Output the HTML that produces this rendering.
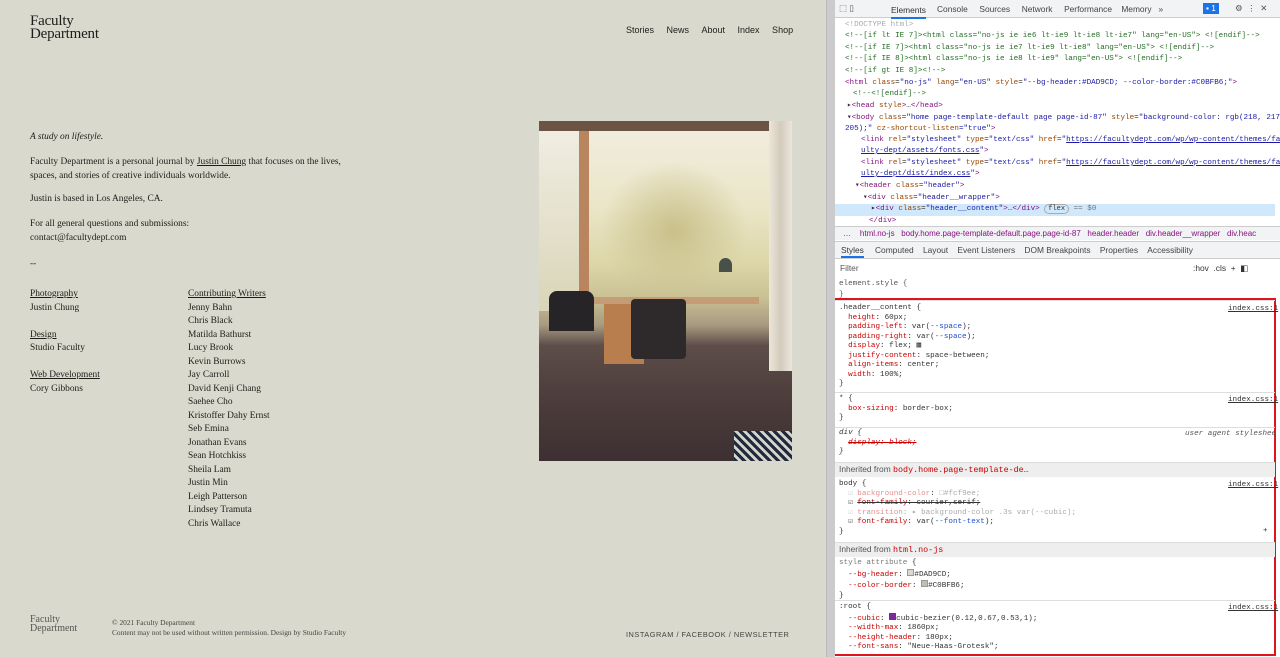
<!DOCTYPE html>
<html><head><style>
*{box-sizing:border-box;margin:0;padding:0}
body{width:1280px;height:657px;overflow:hidden;position:relative;background:#fff;font-family:"Liberation Serif",serif}
#page{position:absolute;left:0;top:0;width:826px;height:657px;background:#DAD9CD;color:#1d1d1b}
.a{position:absolute;white-space:nowrap}
.s{font-size:9.4px;line-height:13.5px}
u{text-decoration:underline}
#dt{position:absolute;left:835px;top:0;width:445px;height:657px;background:#fff;font-family:"Liberation Mono",monospace;font-size:7.6px;color:#333;overflow:hidden}
.m{position:absolute;white-space:nowrap;line-height:11px}
.t{color:#881280}.at{color:#994500}.v{color:#1a1aa6}.c{color:#236e25}
.p{color:#c80000}.b{color:#1f4fd1}
.ui{font-family:"Liberation Sans",sans-serif;font-size:8.4px}
.sec{position:absolute;left:0;width:440px;border-top:1px solid #ddd}
</style></head><body>
<div id="page">
<div class="a" style="left:30px;top:15px;font-size:15px;line-height:13px;letter-spacing:-0.2px">Faculty<br>Department</div>
<div class="a" style="left:626px;top:25px;font-family:'Liberation Sans',sans-serif;font-size:9px;word-spacing:0">Stories&nbsp;&nbsp;&nbsp;&nbsp;&nbsp;News&nbsp;&nbsp;&nbsp;&nbsp;&nbsp;About&nbsp;&nbsp;&nbsp;&nbsp;&nbsp;Index&nbsp;&nbsp;&nbsp;&nbsp;&nbsp;Shop</div>
<div class="a s" style="left:30px;top:131px;font-style:italic">A study on lifestyle.</div>
<div class="a s" style="left:30px;top:156px">Faculty Department is a personal journal by <u>Justin Chung</u> that focuses on the lives,<br>spaces, and stories of creative individuals worldwide.</div>
<div class="a s" style="left:30px;top:193px">Justin is based in Los Angeles, CA.</div>
<div class="a s" style="left:30px;top:218px">For all general questions and submissions:<br>contact@facultydept.com</div>
<div class="a s" style="left:30px;top:258px">--</div>
<div class="a s" style="left:30px;top:288px"><u>Photography</u><br>Justin Chung<br><br><u>Design</u><br>Studio Faculty<br><br><u>Web Development</u><br>Cory Gibbons</div>
<div class="a s" style="left:188px;top:288px"><u>Contributing Writers</u><br>Jenny Bahn<br>Chris Black<br>Matilda Bathurst<br>Lucy Brook<br>Kevin Burrows<br>Jay Carroll<br>David Kenji Chang<br>Saehee Cho<br>Kristoffer Dahy Ernst<br>Seb Emina<br>Jonathan Evans<br>Sean Hotchkiss<br>Sheila Lam<br>Justin Min<br>Leigh Patterson<br>Lindsey Tramuta<br>Chris Wallace</div>
<div class="a" style="left:539px;top:121px;width:253px;height:340px;overflow:hidden;background:linear-gradient(#f1ede0 0%,#ebe6c8 25%,#dcd6a8 42%,#c9c194 52%,#a89a80 60%,#5e4e4a 66%,#4e3e3c 80%,#3d3032 100%)">
 <div class="a" style="left:0;top:0;width:253px;height:10px;background:#6b5444"></div>
 <div class="a" style="left:40px;top:10px;width:10px;height:200px;background:#b8855f"></div>
 <div class="a" style="left:0;top:10px;width:40px;height:180px;background:linear-gradient(#f0ede2,#d9d5b8)"></div>
 <div class="a" style="left:230px;top:0;width:23px;height:250px;background:linear-gradient(90deg,#ece6da,#d3cbbc,#ebe6dc)"></div>
 <div class="a" style="left:60px;top:40px;width:150px;height:140px;background:radial-gradient(#c9c08a,transparent 70%)"></div>
 <div class="a" style="left:55px;top:176px;width:165px;height:7px;background:#c49c76"></div>
 <div class="a" style="left:65px;top:183px;width:40px;height:60px;background:#b87e4e"></div>
 <div class="a" style="left:92px;top:178px;width:55px;height:60px;background:#2e2a2c;border-radius:4px"></div>
 <div class="a" style="left:10px;top:170px;width:45px;height:40px;background:#262426;border-radius:8px 8px 0 0"></div>
 <div class="a" style="left:180px;top:137px;width:13px;height:14px;background:#49504a;border-radius:50% 50% 0 0"></div>
 <div class="a" style="left:195px;top:310px;width:58px;height:30px;background:repeating-linear-gradient(45deg,#1f2a3c 0 3px,#d6d3cc 3px 6px)"></div>
</div>
<div class="a" style="left:30px;top:616px;font-size:10px;line-height:8.5px;color:#555">Faculty<br>Department</div>
<div class="a" style="left:112px;top:618px;font-size:7.4px;line-height:10px;color:#444">© 2021 Faculty Department<br>Content may not be used without written permission. Design by Studio Faculty</div>
<div class="a" style="left:626px;top:630px;font-family:'Liberation Sans',sans-serif;font-size:7.4px;letter-spacing:.5px;color:#444">INSTAGRAM / FACEBOOK / NEWSLETTER</div>
</div>
<div style="position:absolute;left:826px;top:0;width:9px;height:657px;background:#cbcbcb;border-left:1px solid #bbb"></div>
<div id="dt">
 <div style="position:absolute;left:0;top:0;width:445px;height:18px;background:#f1f3f4;border-bottom:1px solid #ccc"></div>
 <div class="m ui" style="left:4px;top:3px;color:#555">⬚ ▯</div>
 <div class="m ui" style="left:56px;top:4px;color:#333;border-bottom:2px solid #1a73e8;line-height:13px">Elements</div>
 <div class="m ui" style="left:102px;top:4px;color:#444;word-spacing:0">Console&nbsp;&nbsp;&nbsp;&nbsp;&nbsp;Sources&nbsp;&nbsp;&nbsp;&nbsp;&nbsp;Network&nbsp;&nbsp;&nbsp;&nbsp;&nbsp;Performance&nbsp;&nbsp;&nbsp;&nbsp;Memory&nbsp;&nbsp;&nbsp;»</div>
 <div class="m ui" style="left:368px;top:3px;background:#1a73e8;color:#fff;padding:0 3px;line-height:11px">▪ 1</div>
 <div class="m ui" style="left:400px;top:3px;color:#555">⚙&nbsp;&nbsp;⋮&nbsp;&nbsp;✕</div>
 <div class="m" style="left:10px;top:20px;color:#aaa">&lt;!DOCTYPE html&gt;</div>
 <div class="m c" style="left:10px;top:31px">&lt;!--[if lt IE 7]&gt;&lt;html class="no-js ie ie6 lt-ie9 lt-ie8 lt-ie7" lang="en-US"&gt; &lt;![endif]--&gt;</div>
 <div class="m c" style="left:10px;top:43px">&lt;!--[if IE 7]&gt;&lt;html class="no-js ie ie7 lt-ie9 lt-ie8" lang="en-US"&gt; &lt;![endif]--&gt;</div>
 <div class="m c" style="left:10px;top:54px">&lt;!--[if IE 8]&gt;&lt;html class="no-js ie ie8 lt-ie9" lang="en-US"&gt; &lt;![endif]--&gt;</div>
 <div class="m c" style="left:10px;top:66px">&lt;!--[if gt IE 8]&gt;&lt;!--&gt;</div>
 <div class="m" style="left:10px;top:78px"><span class="t">&lt;html</span> <span class="at">class</span>=<span class="v">"no-js"</span> <span class="at">lang</span>=<span class="v">"en-US"</span> <span class="at">style</span>=<span class="v">"--bg-header:#DAD9CD; --color-border:#C0BFB6;"</span><span class="t">&gt;</span></div>
 <div class="m c" style="left:18px;top:89px">&lt;!--&lt;![endif]--&gt;</div>
 <div class="m" style="left:12px;top:101px">▸<span class="t">&lt;head</span> <span class="at">style</span><span class="t">&gt;</span>…<span class="t">&lt;/head&gt;</span></div>
 <div class="m" style="left:12px;top:113px">▾<span class="t">&lt;body</span> <span class="at">class</span>=<span class="v">"home page-template-default page page-id-87"</span> <span class="at">style</span>=<span class="v">"background-color: rgb(218, 217,</span></div>
 <div class="m v" style="left:10px;top:124px">205);" <span class="at">cz-shortcut-listen</span>="true"<span class="t">&gt;</span></div>
 <div class="m" style="left:26px;top:135px"><span class="t">&lt;link</span> <span class="at">rel</span>=<span class="v">"stylesheet"</span> <span class="at">type</span>=<span class="v">"text/css"</span> <span class="at">href</span>=<span class="v">"<u style="color:#1a1aa6">https://facultydept.com/wp/wp-content/themes/fac</u></span></div>
 <div class="m v" style="left:26px;top:146px"><u>ulty-dept/assets/fonts.css</u>"<span class="t">&gt;</span></div>
 <div class="m" style="left:26px;top:158px"><span class="t">&lt;link</span> <span class="at">rel</span>=<span class="v">"stylesheet"</span> <span class="at">type</span>=<span class="v">"text/css"</span> <span class="at">href</span>=<span class="v">"<u>https://facultydept.com/wp/wp-content/themes/fac</u></span></div>
 <div class="m v" style="left:26px;top:169px"><u>ulty-dept/dist/index.css</u>"<span class="t">&gt;</span></div>
 <div class="m" style="left:20px;top:181px">▾<span class="t">&lt;header</span> <span class="at">class</span>=<span class="v">"header"</span><span class="t">&gt;</span></div>
 <div class="m" style="left:28px;top:193px">▾<span class="t">&lt;div</span> <span class="at">class</span>=<span class="v">"header__wrapper"</span><span class="t">&gt;</span></div>
 <div style="position:absolute;left:0;top:204px;width:440px;height:12px;background:#cfe8fc"></div>
 <div class="m" style="left:36px;top:204px">▸<span class="t">&lt;div</span> <span class="at">class</span>=<span class="v">"header__content"</span><span class="t">&gt;</span>…<span class="t">&lt;/div&gt;</span> <span style="border:1px solid #aaa;border-radius:6px;padding:0 3px;font-size:7px">flex</span> <span style="color:#777">== $0</span></div>
 <div class="m t" style="left:34px;top:216px">&lt;/div&gt;</div>
 <div style="position:absolute;left:0;top:226px;width:445px;height:14px;background:#f1f3f4;border-top:1px solid #ccc"></div>
 <div class="m ui" style="left:8px;top:228px;color:#881280;font-size:8px">…&nbsp;&nbsp;&nbsp;&nbsp;html.no-js&nbsp;&nbsp;&nbsp;body.home.page-template-default.page.page-id-87&nbsp;&nbsp;&nbsp;header.header&nbsp;&nbsp;&nbsp;div.header__wrapper&nbsp;&nbsp;&nbsp;div.heac</div>
 <div style="position:absolute;left:0;top:241px;width:445px;height:18px;background:#f1f3f4;border-top:1px solid #ccc;border-bottom:1px solid #ccc"></div>
 <div class="m ui" style="left:6px;top:245px;color:#333;border-bottom:2px solid #1a73e8;line-height:11px">Styles</div>
 <div class="m ui" style="left:40px;top:245px;color:#444">Computed&nbsp;&nbsp;&nbsp;&nbsp;Layout&nbsp;&nbsp;&nbsp;&nbsp;Event Listeners&nbsp;&nbsp;&nbsp;&nbsp;DOM Breakpoints&nbsp;&nbsp;&nbsp;&nbsp;Properties&nbsp;&nbsp;&nbsp;&nbsp;Accessibility</div>
 <div class="m ui" style="left:5px;top:263px;color:#555">Filter</div>
 <div class="m ui" style="left:358px;top:263px;color:#333">:hov&nbsp;&nbsp;.cls&nbsp;&nbsp;+&nbsp;&nbsp;◧</div>
 <div class="m" style="left:4px;top:279px;color:#555">element.style {<br>}</div>
 <div style="position:absolute;left:-12px;top:298px;width:453px;height:358px;border:2px solid #e0141e"></div>
 <div class="sec" style="top:300px"></div>
 <div class="m" style="left:4px;top:304px;line-height:9.5px">.header__content {<br>&nbsp;&nbsp;<span class="p">height</span>: 60px;<br>&nbsp;&nbsp;<span class="p">padding-left</span>: var(<span class="b">--space</span>);<br>&nbsp;&nbsp;<span class="p">padding-right</span>: var(<span class="b">--space</span>);<br>&nbsp;&nbsp;<span class="p">display</span>: flex; ▦<br>&nbsp;&nbsp;<span class="p">justify-content</span>: space-between;<br>&nbsp;&nbsp;<span class="p">align-items</span>: center;<br>&nbsp;&nbsp;<span class="p">width</span>: 100%;<br>}</div>
 <div class="m" style="left:393px;top:304px;text-decoration:underline">index.css:1</div>
 <div class="sec" style="top:392px"></div>
 <div class="m" style="left:4px;top:395px;line-height:9.5px">* {<br>&nbsp;&nbsp;<span class="p">box-sizing</span>: border-box;<br>}</div>
 <div class="m" style="left:393px;top:395px;text-decoration:underline">index.css:1</div>
 <div class="sec" style="top:427px"></div>
 <div class="m" style="left:4px;top:429px;line-height:9.5px;font-style:italic">div {<br>&nbsp;&nbsp;<s style="color:#c80000">display: block;</s><br>}</div>
 <div class="m" style="left:350px;top:429px;font-style:italic;color:#555">user agent styleshee</div>
 <div style="position:absolute;left:0;top:462px;width:440px;height:15px;background:#eee;border-top:1px solid #ddd"></div>
 <div class="m ui" style="left:4px;top:464px;color:#555">Inherited from <span style="font-family:'Liberation Mono',monospace;color:#c80000">body.home.page-template-de…</span></div>
 <div class="m" style="left:4px;top:480px;line-height:9.5px">body {<br>&nbsp;&nbsp;<span style="color:#ccc">☑</span> <span style="color:#e59090">background-color</span>: <span style="color:#aaa">□#fcf9ee;</span><br>&nbsp;&nbsp;☑ <s><span class="p">font-family</span>: courier,serif;</s><br>&nbsp;&nbsp;<span style="color:#ccc">☑</span> <span style="color:#e59090">transition</span><span style="color:#aaa">: ▸ background-color .3s var(--cubic);</span><br>&nbsp;&nbsp;☑ <span class="p">font-family</span>: var(<span class="b">--font-text</span>);<br>}</div>
 <div class="m" style="left:393px;top:480px;text-decoration:underline">index.css:1</div>
 <div class="m" style="left:428px;top:526px">+</div>
 <div style="position:absolute;left:0;top:542px;width:440px;height:15px;background:#eee;border-top:1px solid #ddd"></div>
 <div class="m ui" style="left:4px;top:544px;color:#555">Inherited from <span style="font-family:'Liberation Mono',monospace;color:#c80000">html.no-js</span></div>
 <div class="m" style="left:4px;top:559px;line-height:9.5px"><span style="color:#777">style attribute</span> {<br>&nbsp;&nbsp;<span class="p">--bg-header</span>: <span style="display:inline-block;width:7px;height:7px;background:#DAD9CD;border:1px solid #999"></span>#DAD9CD;<br>&nbsp;&nbsp;<span class="p">--color-border</span>: <span style="display:inline-block;width:7px;height:7px;background:#C0BFB6;border:1px solid #999"></span>#C0BFB6;<br>}</div>
 <div class="sec" style="top:600px"></div>
 <div class="m" style="left:4px;top:603px;line-height:9.5px">:root {<br>&nbsp;&nbsp;<span class="p">--cubic</span>: <span style="display:inline-block;width:7px;height:7px;background:#7a2a9a"></span>cubic-bezier(0.12,0.67,0.53,1);<br>&nbsp;&nbsp;<span class="p">--width-max</span>: 1860px;<br>&nbsp;&nbsp;<span class="p">--height-header</span>: 180px;<br>&nbsp;&nbsp;<span class="p">--font-sans</span>: "Neue-Haas-Grotesk";</div>
 <div class="m" style="left:393px;top:603px;text-decoration:underline">index.css:1</div>
</div>
</body></html>
